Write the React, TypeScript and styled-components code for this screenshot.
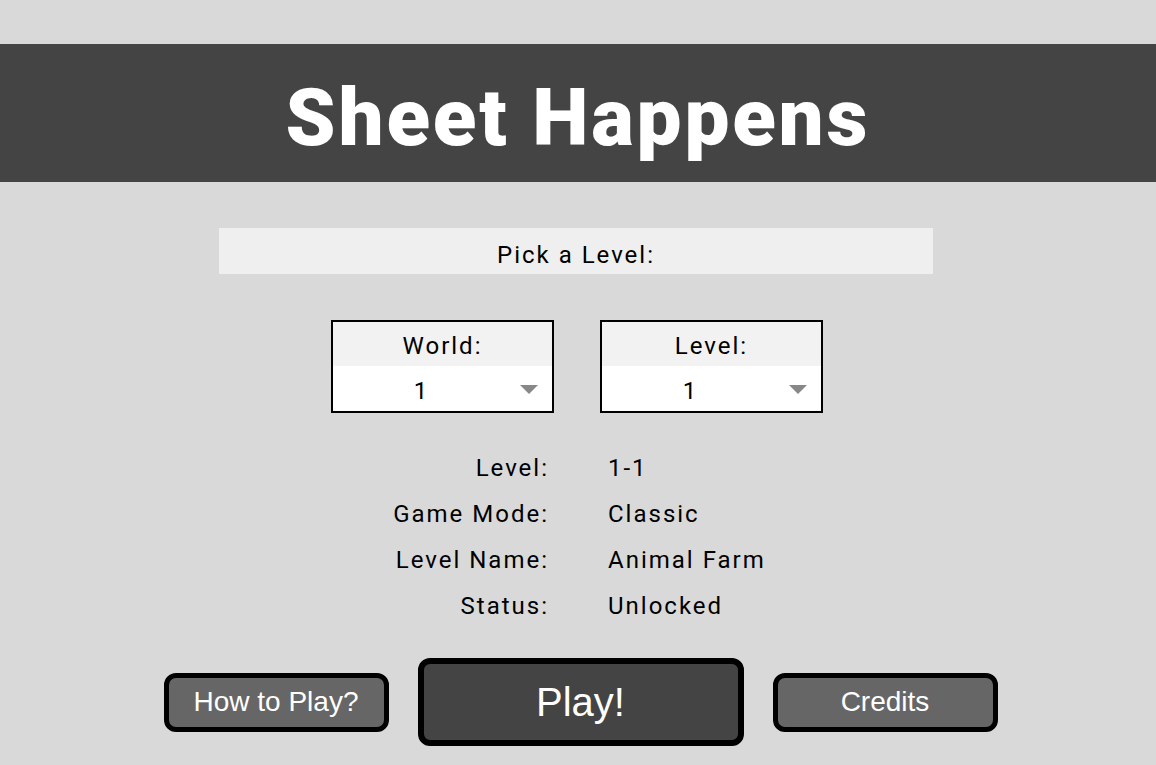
import { Fragment, useState } from "react";
import styled, { createGlobalStyle } from "styled-components";

const GlobalStyle = createGlobalStyle`
  html, body {
    margin: 0;
    padding: 0;
    background: #d9d9d9;
  }
  body {
    min-height: 100vh;
    font-family: Roboto, "Noto Sans", sans-serif;
    color: #000;
  }
`;

const Page = styled.div`
  padding-top: 44px;
  display: flex;
  flex-direction: column;
`;

const Header = styled.header`
  height: 138px;
  background: #444444;
  display: flex;
  align-items: center;
  justify-content: center;
  padding-top: 10px;
  box-sizing: border-box;
`;

const Title = styled.h1`
  margin: 0;
  font-family: Roboto, sans-serif;
  font-weight: 900;
  font-size: 80px;
  letter-spacing: 2.8px;
  color: #fff;
`;

const Main = styled.main`
  display: flex;
  flex-direction: column;
  align-items: center;
`;

const PickBar = styled.div`
  margin: 46px 4px 0 0;
  width: 714px;
  height: 46px;
  background: #efefef;
  display: flex;
  align-items: center;
  justify-content: center;
  padding-top: 8px;
  box-sizing: border-box;
  font-size: 24px;
  letter-spacing: 2px;
`;

const SelectRow = styled.div`
  margin: 46px 2px 0 0;
  display: flex;
  gap: 46px;
`;

const SelectBox = styled.div`
  width: 223px;
  height: 93px;
  border: 2px solid #000;
  box-sizing: border-box;
  display: flex;
  flex-direction: column;
`;

const SelectLabel = styled.label`
  height: 44px;
  background: #f2f2f2;
  display: flex;
  align-items: center;
  justify-content: center;
  padding-top: 4px;
  box-sizing: border-box;
  font-size: 24px;
  letter-spacing: 2px;
`;

const SelectWrap = styled.div`
  position: relative;
  flex: 1;
  background: #fff;

  &::after {
    content: "";
    position: absolute;
    right: 14px;
    top: 19px;
    border-left: 9px solid transparent;
    border-right: 9px solid transparent;
    border-top: 9px solid #888;
    pointer-events: none;
  }
`;

const Select = styled.select`
  appearance: none;
  width: 100%;
  height: 100%;
  border: none;
  outline: none;
  background: transparent;
  padding: 4px 44px 0 0;
  box-sizing: border-box;
  font-family: Roboto, sans-serif;
  font-size: 24px;
  text-align: center;
  text-align-last: center;
  color: #000;
`;

const InfoGrid = styled.dl`
  margin: 32px 0 0 3px;
  width: 400px;
  display: grid;
  grid-template-columns: 1fr 1fr;
  column-gap: 61px;
  font-size: 24px;
  letter-spacing: 2px;
`;

const InfoLabel = styled.dt`
  text-align: right;
  line-height: 46px;
`;

const InfoValue = styled.dd`
  margin: 0 0 0 -2px;
  line-height: 46px;
`;

const ButtonRow = styled.div`
  margin: 29px 0 0 5px;
  display: flex;
  align-items: center;
  gap: 29px;
`;

const MenuButton = styled.button<{ $primary?: boolean }>`
  width: ${(p) => (p.$primary ? "326px" : "225px")};
  height: ${(p) => (p.$primary ? "88px" : "59px")};
  border: ${(p) => (p.$primary ? "6px" : "5px")} solid #000;
  border-radius: 12px;
  background: ${(p) => (p.$primary ? "#444444" : "#666666")};
  color: #fff;
  font-family: "Liberation Sans", Arial, sans-serif;
  font-size: ${(p) => (p.$primary ? "40px" : "28px")};
  cursor: pointer;
  padding: 0;
  box-sizing: border-box;
`;

const levelInfo = [
  { label: "Level:", value: "1-1" },
  { label: "Game Mode:", value: "Classic" },
  { label: "Level Name:", value: "Animal Farm" },
  { label: "Status:", value: "Unlocked" },
];

export default function App() {
  const [world, setWorld] = useState("1");
  const [level, setLevel] = useState("1");

  return (
    <Page>
      <GlobalStyle />
      <Header>
        <Title>Sheet Happens</Title>
      </Header>
      <Main>
        <PickBar>Pick a Level:</PickBar>
        <SelectRow>
          <SelectBox>
            <SelectLabel htmlFor="world">World:</SelectLabel>
            <SelectWrap>
              <Select id="world" value={world} onChange={(e) => setWorld(e.target.value)}>
                <option value="1">1</option>
                <option value="2">2</option>
                <option value="3">3</option>
              </Select>
            </SelectWrap>
          </SelectBox>
          <SelectBox>
            <SelectLabel htmlFor="level">Level:</SelectLabel>
            <SelectWrap>
              <Select id="level" value={level} onChange={(e) => setLevel(e.target.value)}>
                <option value="1">1</option>
                <option value="2">2</option>
                <option value="3">3</option>
              </Select>
            </SelectWrap>
          </SelectBox>
        </SelectRow>
        <InfoGrid>
          {levelInfo.map((row) => (
            <Fragment key={row.label}>
              <InfoLabel>{row.label}</InfoLabel>
              <InfoValue>{row.value}</InfoValue>
            </Fragment>
          ))}
        </InfoGrid>
        <ButtonRow>
          <MenuButton>How to Play?</MenuButton>
          <MenuButton $primary>Play!</MenuButton>
          <MenuButton>Credits</MenuButton>
        </ButtonRow>
      </Main>
    </Page>
  );
}
